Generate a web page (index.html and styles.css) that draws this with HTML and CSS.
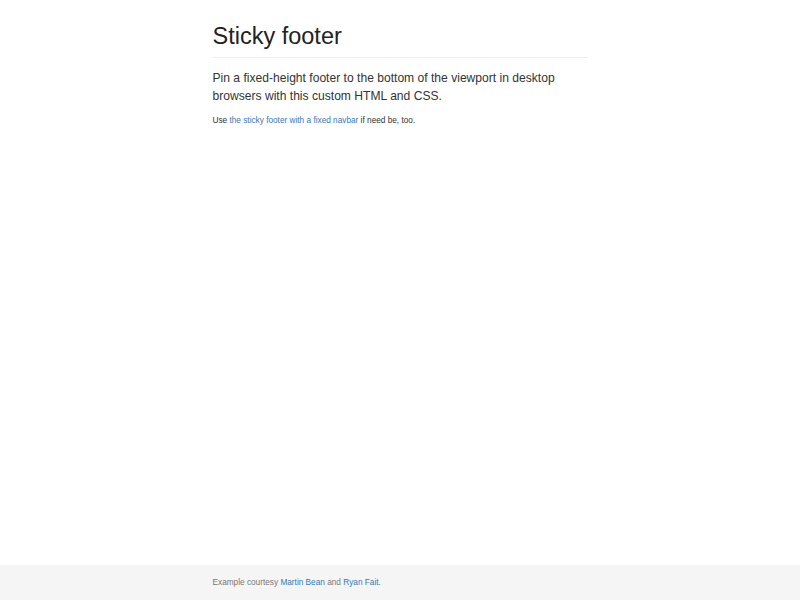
FILE: index.html
```html
<!DOCTYPE html>
<html lang="en">
<head>
<meta charset="utf-8">
<title>Sticky Footer Template</title>
<link rel="stylesheet" href="styles.css">
</head>
<body>
<div class="page">
  <main class="container">
    <div class="page-header">
      <h1>Sticky footer</h1>
    </div>
    <p class="lead">Pin a fixed-height footer to the bottom of the viewport in desktop browsers with this custom HTML and CSS.</p>
    <p class="note">Use <a href="#">the sticky footer with a fixed navbar</a> if need be, too.</p>
  </main>
  <footer class="footer">
    <div class="container">
      <p class="muted">Example courtesy <a href="#">Martin Bean</a> and <a href="#">Ryan Fait</a>.</p>
    </div>
  </footer>
</div>
</body>
</html>
```

FILE: styles.css
```css
html, body {
  height: 100%;
  margin: 0;
}
body {
  font-family: "Liberation Sans", Arial, sans-serif;
  color: #333;
  background: #fff;
}
.page {
  min-height: 100%;
  display: flex;
  flex-direction: column;
}
.container {
  width: 375px;
  margin: 0 auto;
}
main.container {
  flex: 1 0 auto;
}
.page-header {
  margin-top: 23px;
  padding-bottom: 8px;
  border-bottom: 1px solid #eee;
  margin-bottom: 11px;
}
h1 {
  margin: 0;
  font-size: 23.5px;
  font-weight: 400;
  line-height: 26px;
  color: #222;
}
.lead {
  margin: 0 0 10px;
  font-size: 12.1px;
  line-height: 18px;
  font-weight: 300;
  color: #333;
}
.note {
  margin: 0;
  font-size: 8.25px;
  line-height: 12px;
  color: #333;
}
a {
  color: #337ab7;
  text-decoration: none;
}
.footer {
  height: 35px;
  background: #f5f5f5;
  display: flex;
  align-items: center;
}
.muted {
  margin: 0;
  font-size: 8.25px;
  line-height: 12px;
  color: #777;
}
```
